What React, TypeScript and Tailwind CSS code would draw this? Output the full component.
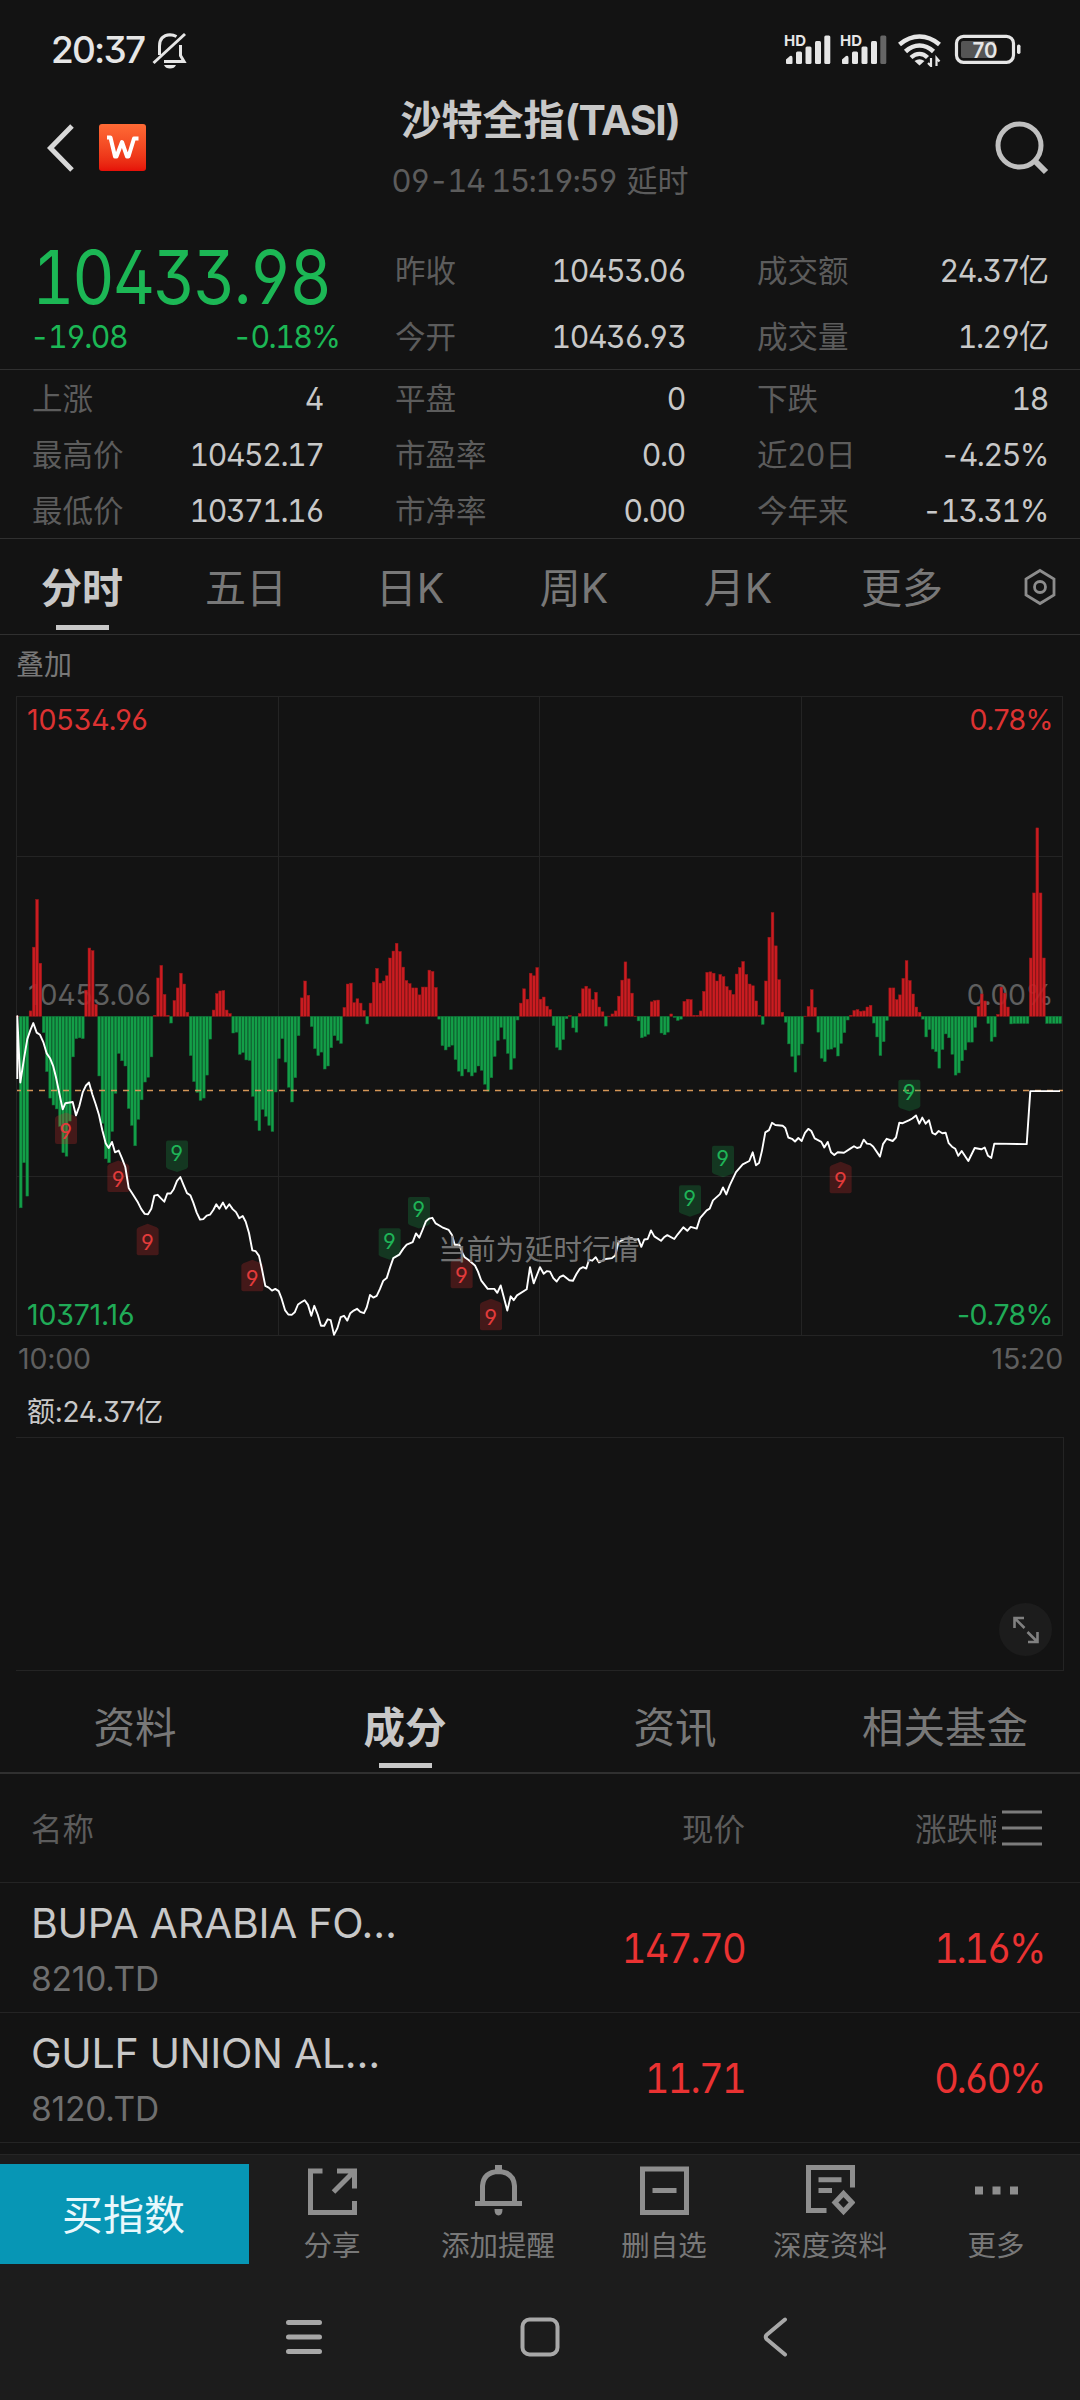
import React from "react";

/* ---------- chart data (chart units: 3 per px across, 2.306 per px down) ---------- */
const U = 3;
const V = 2.3059;
const BASE = 752.5;

// Y value of each minute bar; above the base line is a rise, below it a fall
const BARS = [
  752, 1194, 1090, 1167, 740, 593, 483, 630, 790, 880, 941, 957, 966, 1006, 1067, 1075, 994, 846, 804, 802, 804, 692, 595,
  601, 725, 890, 999, 1081, 1090, 1018, 930, 838, 855, 867, 965, 1004, 1051, 990, 945, 904, 893, 846, 750, 664, 635, 702,
  750, 768, 716, 687, 653, 678, 743, 843, 903, 928, 946, 941, 888, 805, 738, 700, 694, 693, 738, 746, 791, 789, 840, 836,
  853, 854, 937, 993, 1016, 967, 983, 1004, 1018, 927, 850, 804, 858, 916, 950, 894, 797, 710, 671, 704, 776, 827, 843,
  835, 874, 867, 825, 797, 808, 815, 732, 678, 676, 721, 712, 722, 739, 770, 722, 674, 642, 676, 671, 659, 618, 602, 584,
  603, 639, 670, 677, 687, 687, 703, 685, 685, 646, 649, 686, 759, 820, 830, 823, 819, 852, 879, 890, 874, 881, 890, 882,
  867, 877, 909, 925, 894, 845, 808, 778, 805, 838, 875, 849, 761, 722, 689, 713, 653, 659, 640, 713, 708, 729, 737, 774,
  824, 830, 806, 758, 751, 779, 789, 746, 689, 683, 689, 714, 697, 731, 742, 775, 752, 747, 740, 706, 669, 627, 666, 699,
  752, 763, 802, 799, 794, 719, 716, 715, 791, 795, 789, 747, 755, 762, 759, 718, 713, 714, 750, 750, 740, 695, 651, 650,
  653, 671, 656, 661, 684, 692, 702, 655, 640, 626, 656, 678, 682, 717, 750, 771, 671, 570, 513, 590, 668, 743, 766, 816,
  845, 881, 842, 816, 752, 730, 691, 732, 789, 849, 857, 829, 828, 824, 844, 815, 790, 761, 750, 739, 737, 741, 740, 731,
  727, 768, 800, 843, 811, 762, 687, 687, 714, 703, 665, 624, 670, 701, 731, 743, 759, 800, 783, 828, 834, 872, 829, 793,
  802, 840, 888, 883, 855, 830, 812, 812, 778, 730, 701, 717, 769, 810, 800, 748, 685, 699, 731, 770, 769, 769, 769, 769,
  769, 618, 468, 318, 468, 618, 769, 769, 769, 769, 769,
];

const LINE: [number, [number, number][]][] = [
  [0, [[52, 897], [52, 752], [61, 905], [72, 850], [82, 805], [91, 785], [100, 768], [110, 790], [120, 795], [130, 812], [140, 838], [150, 849], [160, 868], [168, 893], [178, 930], [188, 967], [196, 953], [218, 950], [228, 981], [238, 960], [248, 928], [258, 912], [267, 905], [277, 932], [287, 955], [297, 980], [307, 1015], [317, 1045], [326, 1056], [336, 1042], [345, 1066], [356, 1062], [366, 1080], [376, 1100], [386, 1148], [396, 1160], [414, 1182], [424, 1197], [434, 1208], [444, 1209], [454, 1196], [463, 1166], [473, 1164], [483, 1172], [493, 1180], [502, 1161], [512, 1161], [521, 1151], [531, 1132], [541, 1123], [551, 1142], [561, 1160], [571, 1165], [580, 1182], [590, 1205], [600, 1221], [610, 1220], [620, 1212], [630, 1210], [640, 1199], [649, 1186], [658, 1196], [669, 1182], [678, 1196], [688, 1186], [698, 1197], [708, 1204], [718, 1218], [728, 1213], [737, 1226], [747, 1252], [757, 1292], [767, 1294], [777, 1305], [786, 1336], [796, 1374], [806, 1378], [816, 1385], [826, 1381], [836, 1386], [845, 1404], [855, 1430], [865, 1440], [875, 1441], [884, 1435], [894, 1417], [904, 1412], [914, 1407], [924, 1418], [934, 1443], [943, 1420], [953, 1440], [963, 1466], [973, 1466], [983, 1451], [992, 1453], [1002, 1487], [1012, 1472], [1022, 1446], [1032, 1443], [1042, 1454], [1051, 1437], [1061, 1431], [1071, 1427], [1081, 1434]]],
  [1080, [[12, 1437], [20, 1424], [30, 1395], [40, 1401], [50, 1397], [60, 1381], [70, 1362], [80, 1356], [90, 1332], [100, 1310], [118, 1302], [130, 1288], [140, 1279], [158, 1273], [168, 1253], [178, 1263], [188, 1244], [198, 1225], [207, 1219], [217, 1217], [227, 1230], [247, 1239], [266, 1245], [276, 1257], [284, 1279], [298, 1279], [308, 1300], [314, 1308], [325, 1314], [345, 1327], [354, 1341], [364, 1362], [383, 1381], [403, 1381], [412, 1390], [422, 1373], [442, 1431], [452, 1398], [461, 1407], [471, 1396], [500, 1382], [510, 1331], [521, 1368], [540, 1331], [551, 1346], [561, 1340], [570, 1341], [580, 1356], [590, 1364], [600, 1353], [610, 1350], [628, 1361], [639, 1362], [649, 1347], [659, 1335], [669, 1331], [679, 1334], [687, 1314], [697, 1316], [707, 1308], [717, 1320], [737, 1312], [756, 1310], [766, 1304], [775, 1274], [795, 1265], [815, 1264], [825, 1268], [835, 1266], [844, 1284], [853, 1267], [863, 1266], [873, 1246], [883, 1260], [903, 1270], [912, 1262], [922, 1257], [943, 1266], [953, 1255], [970, 1239], [982, 1247], [992, 1238], [1010, 1242], [1020, 1218], [1040, 1200], [1049, 1196], [1059, 1177], [1079, 1163]]],
  [2160, [[1, 1161], [9, 1147], [19, 1163], [29, 1142], [48, 1112], [68, 1094], [88, 1086], [98, 1066], [108, 1096], [117, 1091], [126, 1062], [136, 1020], [147, 1015], [156, 998], [166, 1003], [188, 1005], [196, 1010], [205, 1032], [216, 1035], [225, 1041], [235, 1033], [245, 1040], [255, 1021], [265, 1012], [274, 1017], [284, 1034], [304, 1042], [313, 1055], [323, 1042], [333, 1066], [343, 1072], [353, 1066], [372, 1067], [392, 1057], [402, 1052], [411, 1056], [421, 1054], [431, 1037], [441, 1046], [451, 1047], [460, 1053], [480, 1076], [489, 1047], [500, 1035], [518, 1040], [528, 1032], [538, 998], [548, 999], [568, 992], [577, 988], [588, 981], [598, 1000], [607, 986], [617, 1000], [627, 992], [637, 1021], [646, 1025], [656, 1017], [667, 1022], [677, 1021], [686, 1045], [696, 1053], [706, 1058], [715, 1074], [725, 1063], [745, 1086], [764, 1056], [784, 1059], [794, 1055], [804, 1074], [814, 1079], [823, 1046], [920, 1047], [931, 925], [1020, 925]]],
];

const LINE_POINTS = LINE.flatMap(([dx, pts]) =>
  pts.map(([x, y]) => `${((x + dx) / U).toFixed(1)},${(y / V).toFixed(1)}`)
).join(" ");

// [centre x, top y, direction]
const MARKERS: [number, number, "up" | "down"][] = [
  [198, 974, "up"], [355, 1085, "up"], [443, 1231, "up"], [757, 1314, "up"],
  [531, 1039, "down"], [1169, 1241, "down"], [1257, 1169, "down"],
  [1385, 1307, "up"], [1473, 1404, "up"],
  [2070, 1142, "down"], [2169, 1051, "down"], [2522, 1088, "up"], [2728, 899, "down"],
];

const DIGITS = "[font-feature-settings:'ss01','cv03','cv04']";

function Chart() {
  return (
    <section className="relative h-[646px] w-[1080px]">
      <svg className="absolute left-0 top-0" width="1080" height="646" viewBox="0 6 1080 646">
        <g fill="none" stroke="#242424" strokeWidth="1">
          <rect x="16.5" y="6.5" width="1046" height="639" />
          <path d="M16 166.5H1062M16 486.5H1062M278.5 6V645M539.5 6V645M801.5 6V645" />
        </g>
      </svg>
      <span className="absolute left-[28px] top-[283px] text-[28.500px] leading-[32px] tracking-[-0.2px] text-[#5f5f5f]">10453.06</span>
      <span className="absolute right-[27px] top-[283px] text-[28.500px] leading-[32px] tracking-[-0.5px] text-[#5f5f5f]">0.00%</span>
      <svg className="absolute left-0 top-0" width="1080" height="646" viewBox="0 6 1080 646">
        {BARS.map((v, i) => {
          const h = Math.abs(v - BASE) / V;
          const rise = v < BASE;
          return (
            <rect
              key={i}
              x={16.1 + i * 3.2687}
              y={rise ? v / V : BASE / V}
              width="2.75"
              height={Math.max(h, 0.4)}
              fill={rise ? "#d41c22" : "#13a74b"}
              fillOpacity="0.95"
              stroke={rise ? "#9a1619" : "#0e7036"}
              strokeWidth="0.5"
            />
          );
        })}
        <path d="M17 400.5H1063" stroke="#d59657" strokeWidth="1.3" strokeDasharray="6 6" strokeDashoffset="2" />
        {MARKERS.map(([x, y, dir], i) => (
          <g key={i} transform={`translate(${x / U - 11} ${y / V})`}>
            <path
              d={dir === "up" ? "M11 0L20 3.5Q22 4.5 22 6V29.500Q22 31.500 20 31.500H2Q0 31.500 0 29.500V6Q0 4.500 2 3.500Z" : "M2 0H20Q22 0 22 2V26Q22 27.500 20 28.300L11 31.500L2 28.300Q0 27.500 0 26V2Q0 0 2 0Z"}
              fill={dir === "up" ? "#d92b2b" : "#16a34a"}
              fillOpacity="0.25"
            />
            <text
              x="10.700"
              y={dir === "up" ? 26.500 : 20.500}
              textAnchor="middle"
              fontSize="22"
              fontFamily="Inter"
              className={DIGITS}
              fill={dir === "up" ? "#e23b3b" : "#1fb457"}
            >
              9
            </text>
          </g>
        ))}
        <polyline points={LINE_POINTS} fill="none" stroke="#fff" strokeWidth="1.900" strokeLinejoin="round" />
      </svg>
      <span className="absolute left-[27px] top-[8px] text-[28.500px] leading-[32px] tracking-[-0.1px] text-[#dc3232]">10534.96</span>
      <span className="absolute right-[27px] top-[8px] text-[28.500px] leading-[32px] tracking-[-0.6px] text-[#dc3232]">0.78%</span>
      <span className="absolute left-[27px] top-[603px] text-[28.500px] leading-[32px] tracking-[-0.2px] text-[#20ab57]">10371.16</span>
      <span className="absolute right-[27px] top-[603px] text-[28.500px] leading-[32px] tracking-[-0.6px] text-[#20ab57]">-0.78%</span>
      <span className="absolute left-[438px] top-[537px] text-[28.800px] leading-[34px] text-[#808080]/90">当前为延时行情</span>
    </section>
  );
}

/* ---------- quote ---------- */
function Stat({ label, value }: { label: string; value: string }) {
  return (
    <div className="flex items-center justify-between">
      <span className="text-[30.500px] text-[#5c5c5c]">{label}</span>
      <span className="origin-right scale-x-[0.96] text-[31.500px] tabular-nums tracking-[-1.500px] text-[#c8c8c8]">{value}</span>
    </div>
  );
}

function Quote() {
  return (
    <section>
      <div className="grid h-[158px] grid-cols-[307px_290px_291px] gap-x-[56px] border-b border-[#303030] pl-[32px]">
        <div className="flex flex-col">
          <div className="mt-[28px] h-[74px] origin-left scale-x-[0.885] whitespace-nowrap text-[74px] leading-[74px] tabular-nums tracking-[-2.400px] text-[#1cb755]">
            10433.98
          </div>
          <div className="mt-[3px] flex h-[40px] items-center justify-between text-[31.500px] tabular-nums tracking-[-1.600px] text-[#1cb755]">
            <span className="ml-[-2px] origin-left scale-x-[0.96]">-19.08</span>
            <span className="origin-right scale-x-[0.96]">-0.18%</span>
          </div>
        </div>
        <div className="flex flex-col gap-[26px] pt-[39px] leading-[40px]">
          <Stat label="昨收" value="10453.06" />
          <Stat label="今开" value="10436.93" />
        </div>
        <div className="ml-[16px] flex w-[291px] flex-col gap-[26px] pt-[39px] leading-[40px]">
          <Stat label="成交额" value="24.37亿" />
          <Stat label="成交量" value="1.29亿" />
        </div>
      </div>
      <div className="grid h-[169px] grid-cols-[291px_290px_291px] content-start gap-x-[72px] gap-y-[16px] border-b border-[#303030] pl-[32px] pt-[9px] leading-[40px]">
        <Stat label="上涨" value="4" />
        <Stat label="平盘" value="0" />
        <Stat label="下跌" value="18" />
        <Stat label="最高价" value="10452.17" />
        <Stat label="市盈率" value="0.0" />
        <Stat label="近20日" value="-4.25%" />
        <Stat label="最低价" value="10371.16" />
        <Stat label="市净率" value="0.00" />
        <Stat label="今年来" value="-13.31%" />
      </div>
    </section>
  );
}

/* ---------- status bar icons ---------- */
function Signal({ dimLast }: { dimLast?: boolean }) {
  return (
    <svg className="overflow-visible" width="48" height="32" viewBox="0 0 48 32">
      <text x="0" y="13" fontSize="15" fontWeight="700" fontFamily="Inter" fill="#e6e6e6" textLength="22" lengthAdjust="spacingAndGlyphs">HD</text>
      <g fill="#e6e6e6">
        <path d="M2 30V26.500L6 23Q8.500 22 8.500 25V30Q8.500 31 7.500 31H3Q2 31 2 30Z" />
        <rect x="12" y="18.500" width="6" height="12.500" rx="1.500" />
        <rect x="21.500" y="13.500" width="6" height="17.500" rx="1.500" />
        <rect x="31" y="8" width="6" height="23" rx="1.500" />
        <rect x="40.300" y="2.500" width="6" height="28.500" rx="1.500" fill={dimLast ? "#666" : "#e6e6e6"} />
      </g>
    </svg>
  );
}

function StatusBar() {
  return (
    <header className="flex h-[84px] items-start text-[#e6e6e6]">
      <span className="ml-[51px] mt-[30px] text-[37px] font-medium leading-[40px] tracking-[-1.800px]">20:37</span>
      <svg className="ml-[7px] mt-[31px]" width="37" height="38" viewBox="0 0 37 38" fill="none" stroke="#e6e6e6" strokeWidth="3">
        <path d="M8.500 24V15Q8.500 4.500 19 3.800Q22.500 3.800 25.500 5.500" />
        <path d="M13 30.500H33L29.500 24.500V14" />
        <path d="M2.500 32L34 3" />
        <path d="M13 34H25Q23.500 37.500 19 37.500Q14.500 37.500 13 34Z" fill="#e6e6e6" stroke="none" />
      </svg>
      <div className="ml-auto mr-[58px] mt-[33px] flex h-[34px]">
        <Signal />
        <div className="ml-[8px]">
          <Signal dimLast />
        </div>
        <svg className="ml-[9px]" width="46" height="34" viewBox="0 0 46 34" fill="none" stroke="#e6e6e6" strokeWidth="4.600">
          <path d="M2.500 11.500Q12 3.500 22.500 3.500Q33 3.500 42.500 11.500" />
          <path d="M8.500 18.500Q15 12.500 22.500 12.500Q30 12.500 36.500 18.500" />
          <path d="M14 24.500Q18 20.800 22.500 20.800Q27 20.800 30.500 24.500" strokeWidth="4.200" />
          <path d="M17.500 28Q22.500 24.500 27.500 28L22.500 32.500Z" fill="#e6e6e6" stroke="none" />
          <path d="M34 25V33L31 30M39.500 33V25L42.500 28.500" strokeWidth="2.200" />
        </svg>
        <svg className="ml-[11px]" width="68" height="34" viewBox="0 0 68 34">
          <rect x="2.500" y="3.300" width="57" height="26" rx="7" fill="none" stroke="#e6e6e6" strokeWidth="3.200" />
          <rect x="7" y="8" width="34" height="17" rx="2" fill="#555" />
          <rect x="63" y="11.500" width="3.500" height="9.500" rx="1.700" fill="#e6e6e6" />
          <text x="31" y="24.500" textAnchor="middle" fontSize="22" fontWeight="600" fontFamily="Inter" fill="#e6e6e6" textLength="25" lengthAdjust="spacingAndGlyphs">70</text>
        </svg>
      </div>
    </header>
  );
}

function TitleBar() {
  return (
    <div className="relative flex h-[128px] items-center justify-between pl-[46px] pr-[30px]">
      <div className="flex items-center">
        <svg width="29" height="50" viewBox="0 0 29 50" fill="none" stroke="#d8d8d8" strokeWidth="5">
          <path d="M26 3L4.500 25L26 47" />
        </svg>
        <div className="ml-[24px] flex size-[47px] items-center justify-center rounded-[3px] bg-linear-to-b from-[#ff6a35] to-[#e60f08]">
          <svg width="35" height="26" viewBox="0 0 35 26" fill="none" stroke="#fff" strokeWidth="4" strokeLinejoin="round">
            <path d="M2 2.500H5.500L10 21.500H11.500L17 7L22 21.500H23.500L29 3.500H33.500" />
          </svg>
        </div>
      </div>
      <div className="absolute inset-x-0 top-[11px] flex flex-col items-center">
        <h1 className="h-[50px] whitespace-nowrap text-[41px] font-bold leading-[50px] text-[#c8c8c8]">
          沙特全指<span className="tracking-[-1.300px]">(TASI)</span>
        </h1>
        <p className="mt-[16px] h-[40px] whitespace-nowrap text-[31px] leading-[40px] tabular-nums tracking-[-1.500px] text-[#5c5c5c]">
          09-14 15:19:59 <span className="ml-[3px] tracking-normal">延时</span>
        </p>
      </div>
      <svg width="56" height="56" viewBox="0 0 56 56" fill="none" stroke="#c0c0c0" strokeWidth="5">
        <circle cx="25.500" cy="25.500" r="21.500" />
        <path d="M41 41L52 52" strokeWidth="6" />
      </svg>
    </div>
  );
}

function ChartTabs() {
  const tabs = ["分时", "五日", "日K", "周K", "月K", "更多"];
  return (
    <nav className="flex h-[96px] border-b border-[#303030]">
      {tabs.map((t, i) => (
        <div key={t} className="flex w-[164px] flex-col items-center pt-[23px]">
          <span className={i === 0 ? "text-[41px] font-bold leading-[52px] text-[#c8c8c8]" : "text-[41px] leading-[52px] text-[#787878]"}>{t}</span>
          {i === 0 && <i className="mt-[11px] h-[5px] w-[53px] bg-[#c8c8c8]" />}
        </div>
      ))}
      <svg className="ml-[38px] mt-[29px]" width="36" height="38" viewBox="0 0 36 38" fill="none" stroke="#8c8c8c" strokeWidth="2.800">
        <path d="M18 2.500L32 11V27L18 35.500L4 27V11Z" />
        <circle cx="18" cy="19" r="5.500" />
      </svg>
    </nav>
  );
}

function VolumePanel() {
  return (
    <section className="ml-[16px] flex h-[234px] w-[1048px] items-end justify-end border-y border-r border-[#242424] pb-[14px] pr-[11px]">
      <div className="flex size-[53px] items-center justify-center rounded-full bg-[#1c1c1c]">
        <svg width="30" height="30" viewBox="0 0 30 30" fill="none" stroke="#808080" strokeWidth="2.600">
          <path d="M13 3H3.500V13M3.500 3L13.500 13M17 27H26.500V17M26.500 27L16.500 17" />
        </svg>
      </div>
    </section>
  );
}

function InfoTabs() {
  const tabs = ["资料", "成分", "资讯", "相关基金"];
  return (
    <nav className="flex h-[103px] border-b-2 border-[#303030]">
      {tabs.map((t, i) => (
        <div key={t} className="flex w-[270px] flex-col items-center pt-[31px]">
          <span className={i === 1 ? "text-[41.500px] font-bold leading-[52px] text-[#c8c8c8]" : "text-[41.500px] leading-[52px] text-[#787878]"}>{t}</span>
          {i === 1 && <i className="mt-[9px] h-[5px] w-[53px] bg-[#c8c8c8]" />}
        </div>
      ))}
    </nav>
  );
}

function Holdings() {
  const rows = [
    { name: "BUPA ARABIA FO…", code: "8210.TD", price: "147.70", pct: "1.16%" },
    { name: "GULF UNION AL…", code: "8120.TD", price: "11.71", pct: "0.60%" },
  ];
  return (
    <section>
      <div className="flex h-[109px] items-center border-b border-[#242424] pl-[31px] text-[31.500px] text-[#5c5c5c]">
        <span className="w-[400px] pt-[2px]">名称</span>
        <span className="w-[314px] pt-[2px] text-right">现价</span>
        <span className="ml-[170px] w-[81px] overflow-hidden whitespace-nowrap pt-[2px]">涨跌幅</span>
        <svg className="ml-[6px]" width="40" height="36" viewBox="0 0 40 36" stroke="#7c7c7c" strokeWidth="3">
          <path d="M0 2H40M0 18H40M0 34H40" />
        </svg>
      </div>
      {rows.map((r) => (
        <div key={r.code} className="flex h-[130px] items-center border-b border-[#242424] pl-[31px]">
          <div className="w-[400px] self-start pt-[14px]">
            <div className="text-[41px] leading-[52px] tracking-[-0.300px] text-[#c8c8c8]">{r.name}</div>
            <div className="mt-[10px] text-[33.500px] leading-[40px] tracking-[-0.200px] text-[#6f6f6f]">{r.code}</div>
          </div>
          <span className="w-[314px] origin-right scale-x-[0.93] pt-[2px] text-right text-[41px] tabular-nums tracking-[-1.900px] text-[#ea3232]">{r.price}</span>
          <span className="w-[299px] origin-right scale-x-[0.93] pt-[2px] text-right text-[41px] tabular-nums tracking-[-2.600px] text-[#ea3232]">{r.pct}</span>
        </div>
      ))}
    </section>
  );
}

const ACTIONS: { label: string; icon: React.ReactNode }[] = [
  {
    label: "分享",
    icon: <path d="M14.500 7H2.500V48.500H46.500V37M29 7H46.500V24.500M46 7.500L25.500 28" />,
  },
  {
    label: "添加提醒",
    icon: (
      <>
        <path d="M8.500 38.500V22Q9.500 8 24.500 7.500Q39.500 8 40.500 22V38.500" />
        <path d="M1 39.500H48" />
        <path d="M24.500 1V8" strokeWidth="7" />
        <path d="M20.500 45H28.500Q28.500 51.500 24.500 51.500Q20.500 51.500 20.500 45Z" fill="#8e8e8e" stroke="none" />
      </>
    ),
  },
  {
    label: "删自选",
    icon: <path d="M2.500 5H46.500V48.500H2.500ZM12.500 26.500H36.500" />,
  },
  {
    label: "深度资料",
    icon: (
      <>
        <path d="M20.500 46.500H2.500V3.500H46.500V23.500M12.500 15.800H35.500M12.500 26.500H26" />
        <path d="M37.500 29.500L46 38.500L37.500 47.500L29 38.500Z" />
      </>
    ),
  },
  {
    label: "更多",
    icon: <path d="M3 26.500H11M20.500 26.500H28.500M38 26.500H46" strokeWidth="8" />,
  },
];

function ActionBar() {
  return (
    <footer className="mt-[11px] flex h-[246px] flex-col border-t border-[#262626] bg-[#1c1c1c]">
      <div className="flex pt-[9px]">
        <button className="h-[100px] w-[249px] bg-[#0796b5] pr-[2px] pt-[3px] text-[41px] text-[#e8f8fc]">买指数</button>
        {ACTIONS.map((a) => (
          <div key={a.label} className="flex w-[166px] flex-col items-center">
            <svg width="49" height="52" viewBox="0 0 49 52" fill="none" stroke="#8e8e8e" strokeWidth="5">
              {a.icon}
            </svg>
            <span className="mt-[12px] whitespace-nowrap text-[28.500px] leading-[36px] text-[#787878]">{a.label}</span>
          </div>
        ))}
      </div>
      <div className="ml-[285px] mt-[52px] flex h-[42px] items-center">
        <svg width="38" height="40" viewBox="0 0 38 40" stroke="#a8a8a8" strokeWidth="5" strokeLinecap="round">
          <path d="M3.500 5.500H34.500M3.500 20H34.500M3.500 34.500H34.500" />
        </svg>
        <svg className="ml-[197px]" width="40" height="40" viewBox="0 0 40 40" fill="none" stroke="#a8a8a8" strokeWidth="4">
          <rect x="2.500" y="2.500" width="35" height="35" rx="7" />
        </svg>
        <svg className="ml-[202px]" width="26" height="40" viewBox="0 0 26 40" fill="none" stroke="#a8a8a8" strokeWidth="4" strokeLinecap="round" strokeLinejoin="round">
          <path d="M23 2.500L4.500 18Q3 20 4.500 22L23 37.500" />
        </svg>
      </div>
    </footer>
  );
}

export default function App() {
  return (
    <div className="relative flex h-[2400px] w-[1080px] flex-col overflow-hidden bg-[#131313] font-['Inter','Noto_Sans_CJK_SC',sans-serif] [font-feature-settings:'ss01','cv03','cv04']">
      <StatusBar />
      <TitleBar />
      <Quote />
      <ChartTabs />
      <div className="h-[61px] pl-[16px] pt-[12px] text-[28px] leading-[36px] text-[#787878]">叠加</div>
      <Chart />
      <div className="flex h-[50px] justify-between pl-[18px] pr-[17px] pt-[2px] text-[28.500px] leading-[32px] tracking-[-0.200px] text-[#5f5f5f]">
        <span>10:00</span>
        <span>15:20</span>
      </div>
      <div className="h-[46px] pl-[27px] pt-[3px] text-[28px] leading-[36px] tracking-[-0.300px] text-[#c8c8c8]">额:24.37亿</div>
      <VolumePanel />
      <InfoTabs />
      <Holdings />
      <ActionBar />
    </div>
  );
}
